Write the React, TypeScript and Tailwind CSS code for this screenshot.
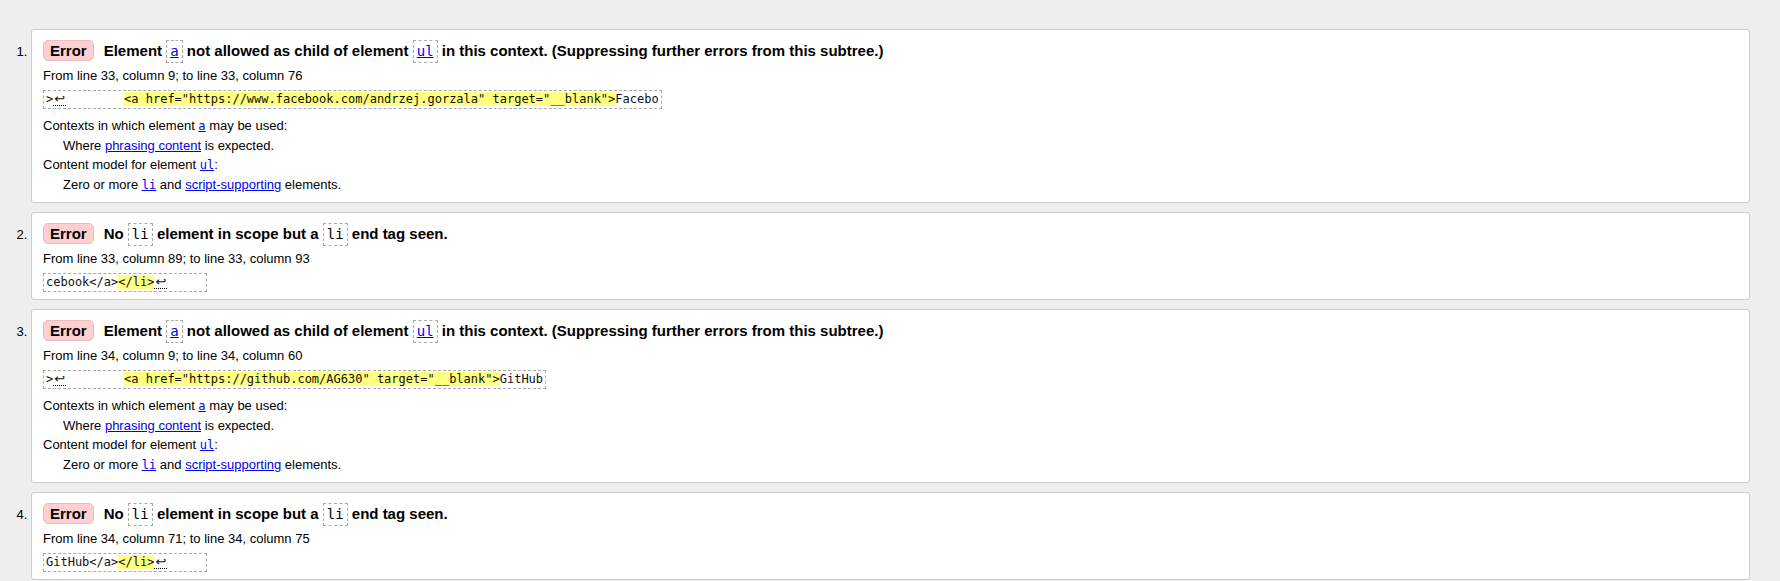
import type { ReactNode } from "react";

const mono = "font-['DejaVu_Sans_Mono','Liberation_Mono',monospace]";

// inline code in the message title, dashed box
const Code = ({ children, link }: { children: ReactNode; link?: boolean }) => (
  <code
    className={`inline-block border border-dashed border-[#aaa] px-[3px] py-[2px] text-[14px] leading-[17px] font-normal ${mono}`}
  >
    {link ? <a className="text-[#0000ee] underline">{children}</a> : children}
  </code>
);

const CodeLink = ({ children }: { children: ReactNode }) => (
  <a className={`text-[12px] text-[#0000ee] underline ${mono}`}>{children}</a>
);

const Lf = () => (
  <span className="inline-block w-[13px] border-b border-dotted border-black text-center font-['DejaVu_Sans',sans-serif] text-[13px] leading-[13px]">
    ↩
  </span>
);

const Hl = ({ children }: { children: ReactNode }) => (
  <b className="bg-[#ffff80] font-normal">{children}</b>
);

const Extract = ({ children }: { children: ReactNode }) => (
  <p className="mt-[5px] leading-[19px]">
    <code
      className={`inline-block whitespace-pre border border-dashed border-[#aaa] pl-[2px] pr-[2px] py-px align-top text-[12px] leading-[15px] text-[#111] ${mono}`}
    >
      {children}
    </code>
  </p>
);

const Badge = () => (
  <strong className="mr-[10px] inline-block rounded-[5px] border border-[#ebbcbc] bg-[#fcd0d0] px-[6px] py-px leading-[17px]">
    Error
  </strong>
);

const Item = ({
  title,
  location,
  extract,
  details,
}: {
  title: ReactNode;
  location: string;
  extract: ReactNode;
  details?: ReactNode;
}) => (
  <li className="mb-[9px] rounded-[3px] border border-[#ccc] bg-white px-[11px] pt-[9px] pb-[7px]">
    <p className="text-[15px] font-bold leading-[23px] text-black">
      <Badge />
      {title}
    </p>
    <p className="mt-[4px] leading-[18px]">{location}</p>
    <Extract>{extract}</Extract>
    {details}
  </li>
);

const Details = ({ el, parent }: { el: string; parent: string }) => (
  <dl className="mt-[7px] leading-[19px]">
    <dt>
      Contexts in which element <CodeLink>{el}</CodeLink> may be used:
    </dt>
    <dd className="pl-5">
      Where <a className="text-[#0000ee] underline">phrasing content</a> is expected.
    </dd>
    <dt>
      Content model for element <CodeLink>{parent}</CodeLink>:
    </dt>
    <dd className="pl-5">
      Zero or more <CodeLink>li</CodeLink> and{" "}
      <a className="text-[#0000ee] underline">script-supporting</a> elements.
    </dd>
  </dl>
);

const NotAllowed = () => (
  <>
    Element <Code link>a</Code> not allowed as child of element <Code link>ul</Code> in this
    context. (Suppressing further errors from this subtree.)
  </>
);

const NoLi = () => (
  <>
    No <Code>li</Code> element in scope but a <Code>li</Code> end tag seen.
  </>
);

export default function App() {
  return (
    <div className="min-h-[581px] w-full bg-[#eee] font-['Liberation_Sans',Arial,sans-serif] text-[13px] text-black">
      <ol className="list-decimal list-outside pt-[29px] pl-[31px] pr-[30px]">
        <Item
          title={<NotAllowed />}
          location="From line 33, column 9; to line 33, column 76"
          extract={
            <>
              {">"}
              <Lf />
              {"        "}
              <Hl>{'<a href="https://www.facebook.com/andrzej.gorzala" target="__blank">'}</Hl>
              Facebo
            </>
          }
          details={<Details el="a" parent="ul" />}
        />
        <Item
          title={<NoLi />}
          location="From line 33, column 89; to line 33, column 93"
          extract={
            <>
              {"cebook</a>"}
              <Hl>{"</li>"}</Hl>
              <Lf />
              {"     "}
            </>
          }
        />
        <Item
          title={<NotAllowed />}
          location="From line 34, column 9; to line 34, column 60"
          extract={
            <>
              {">"}
              <Lf />
              {"        "}
              <Hl>{'<a href="https://github.com/AG630" target="__blank">'}</Hl>
              GitHub
            </>
          }
          details={<Details el="a" parent="ul" />}
        />
        <Item
          title={<NoLi />}
          location="From line 34, column 71; to line 34, column 75"
          extract={
            <>
              {"GitHub</a>"}
              <Hl>{"</li>"}</Hl>
              <Lf />
              {"     "}
            </>
          }
        />
      </ol>
    </div>
  );
}
